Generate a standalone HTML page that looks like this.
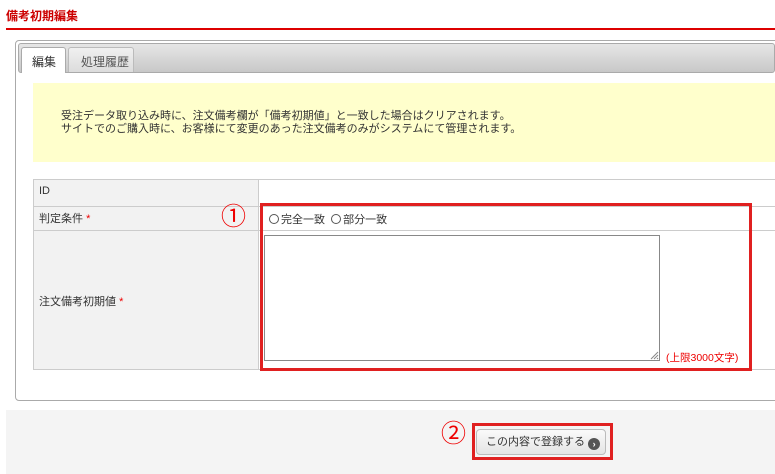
<!DOCTYPE html>
<html><head><meta charset="utf-8"><style>
*{margin:0;padding:0;box-sizing:border-box}
body{width:775px;height:474px;overflow:hidden;background:#fff;font-family:"Liberation Sans","Noto Sans CJK JP",sans-serif;font-size:11px;color:#333;position:relative}
.a{position:absolute}
.r{display:inline-block;width:10px;height:10px;border:1px solid #555;border-radius:50%;vertical-align:-1px;margin-right:2px}
</style></head><body>
<div class="a" style="left:6px;top:7px;font-size:12px;font-weight:bold;color:#c00">備考初期編集</div>
<div class="a" style="left:6px;top:28px;width:769px;height:2px;background:#d00"></div>
<div class="a" style="left:15px;top:40px;width:770px;height:361px;border:1px solid #aaa;border-radius:4px"></div>
<div class="a" style="left:18px;top:43px;width:757px;height:30px;background:linear-gradient(#e6e6e6,#c8c8c8);border:1px solid #aaa;border-radius:3px"></div>
<div class="a" style="left:21px;top:47px;width:45px;height:26px;background:#fff;border:1px solid #aaa;border-bottom:none;border-radius:3px 3px 0 0;padding:5px 0 0 10px;font-size:12px">編集</div>
<div class="a" style="left:68px;top:47px;width:66px;height:25px;background:linear-gradient(#f0f0f0,#dcdcdc);border:1px solid #bbb;border-bottom:none;border-radius:3px 3px 0 0;padding:5px 0 0 12px;font-size:12px;color:#555">処理履歴</div>
<div class="a" style="left:33px;top:83px;width:742px;height:79px;background:#ffffcc;padding:27px 0 0 28px;line-height:13px;font-size:11px">受注データ取り込み時に、注文備考欄が「備考初期値」と一致した場合はクリアされます。<br>サイトでのご購入時に、お客様にて変更のあった注文備考のみがシステムにて管理されます。</div>
<div class="a" style="left:33px;top:179px;width:742px;height:191px;border-top:1px solid #ccc;border-left:1px solid #ccc"></div>
<div class="a" style="left:34px;top:180px;width:225px;height:189px;background:#f2f2f2;border-right:1px solid #ccc"></div>
<div class="a" style="left:34px;top:206px;width:741px;height:1px;background:#ccc"></div>
<div class="a" style="left:34px;top:230px;width:741px;height:1px;background:#ccc"></div>
<div class="a" style="left:34px;top:369px;width:741px;height:1px;background:#ccc"></div>
<div class="a" style="left:39px;top:185px">ID</div>
<div class="a" style="left:39px;top:210px">判定条件 <span style="color:#e00">*</span></div>
<div class="a" style="left:39px;top:293px">注文備考初期値 <span style="color:#e00">*</span></div>
<div class="a" style="left:221px;top:203px;font-size:25px;color:#e00;line-height:28px">①</div>
<div class="a" style="left:269px;top:211px;font-size:11px"><span class="r"></span>完全一致 &nbsp;<span class="r"></span>部分一致</div>
<div class="a" style="left:264px;top:235px;width:396px;height:126px;border:1px solid #888"></div>
<svg class="a" style="left:650px;top:351px" width="9" height="9"><path d="M1 8L8 1M4 8L8 4M7 8L8 7" stroke="#888"/></svg>
<div class="a" style="left:666px;top:350px;color:#e00;font-size:10.5px">(上限3000文字)</div>
<div class="a" style="left:260px;top:203px;width:492px;height:168px;border:3px solid #e02020"></div>
<div class="a" style="left:6px;top:410px;width:769px;height:64px;background:#f4f4f4"></div>
<div class="a" style="left:441px;top:420px;font-size:25px;color:#e00;line-height:28px">②</div>
<div class="a" style="left:476px;top:429px;width:130px;height:26px;border:1px solid #bbb;border-radius:4px;background:linear-gradient(#fafafa,#e4e4e4);padding:6px 0 0 9px;font-size:11px;color:#333;line-height:13px">この内容で登録する <span style="display:inline-block;width:12px;height:12px;border-radius:50%;background:#555;color:#fff;font-size:9px;font-weight:bold;text-align:center;line-height:12px;vertical-align:-2px">›</span></div>
<div class="a" style="left:472px;top:423px;width:141px;height:37px;border:3px solid #e02020"></div>
</body></html>
